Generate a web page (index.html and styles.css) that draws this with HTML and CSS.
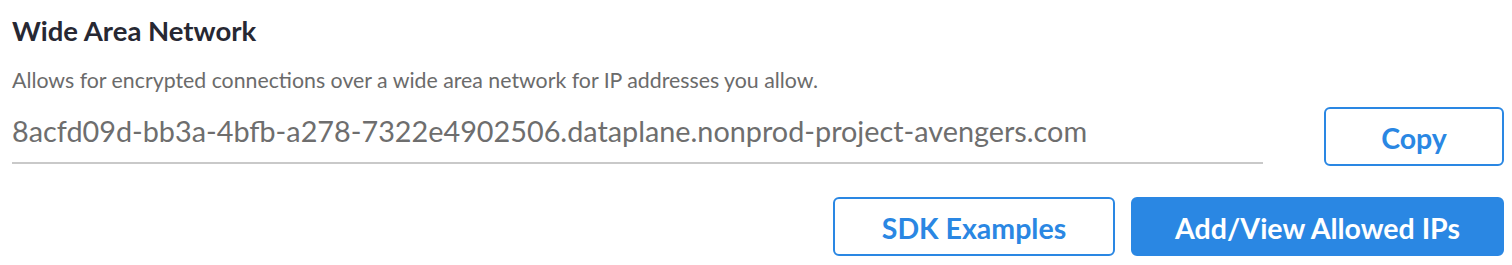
FILE: index.html
```html
<!DOCTYPE html>
<html>
<head>
<meta charset="utf-8">
<link rel="stylesheet" href="styles.css">
</head>
<body>
<section class="wan">
  <h2 class="wan-title">Wide Area Network</h2>
  <p class="wan-desc">Allows for encrypted connections over a wide area network for IP addresses you allow.</p>
  <div class="host-row">
    <div class="host-field">8acfd09d-bb3a-4bfb-a278-7322e4902506.dataplane.nonprod-project-avengers.com</div>
    <button class="btn btn-outline btn-copy">Copy</button>
  </div>
  <div class="actions">
    <button class="btn btn-outline btn-sdk">SDK Examples</button>
    <button class="btn btn-primary btn-ips">Add/View Allowed IPs</button>
  </div>
</section>
</body>
</html>
```
FILE: styles.css
```css
html, body {
  margin: 0;
  padding: 0;
  background: #ffffff;
}
body {
  font-family: Lato, "Open Sans", "Liberation Sans", sans-serif;
}
.wan {
  padding: 0 8px 0 12px;
}
.wan-title {
  margin: 0;
  padding-top: 16px;
  font-size: 27.5px;
  line-height: 30px;
  font-weight: 700;
  color: #272833;
}
.wan-desc {
  margin: 0;
  padding-top: 22px;
  font-size: 21.3px;
  line-height: 24px;
  color: #6b6b6b;
}
.host-row {
  display: flex;
  align-items: flex-start;
  gap: 61px;
  margin-top: 13px;
}
.host-field {
  flex: 1;
  padding-top: 8px;
  height: 49px;
  font-size: 28.8px;
  line-height: 36px;
  color: #6e6e6e;
  border-bottom: 2px solid #c9c9c9;
  white-space: nowrap;
  overflow: hidden;
}
.btn {
  font-family: inherit;
  font-weight: 700;
  font-size: 28.5px;
  height: 59px;
  padding: 2px 0 0;
  border-radius: 6px;
  cursor: pointer;
}
.btn-outline {
  background: #ffffff;
  color: #2a87e3;
  border: 2px solid #2a87e3;
}
.btn-primary {
  background: #2a87e3;
  color: #ffffff;
  border: 2px solid #2a87e3;
}
.btn-copy {
  width: 180px;
  margin-top: 2px;
}
.actions {
  display: flex;
  justify-content: flex-end;
  gap: 16px;
  margin-top: 31px;
}
.btn-sdk {
  width: 282px;
}
.btn-ips {
  width: 373px;
}
```
